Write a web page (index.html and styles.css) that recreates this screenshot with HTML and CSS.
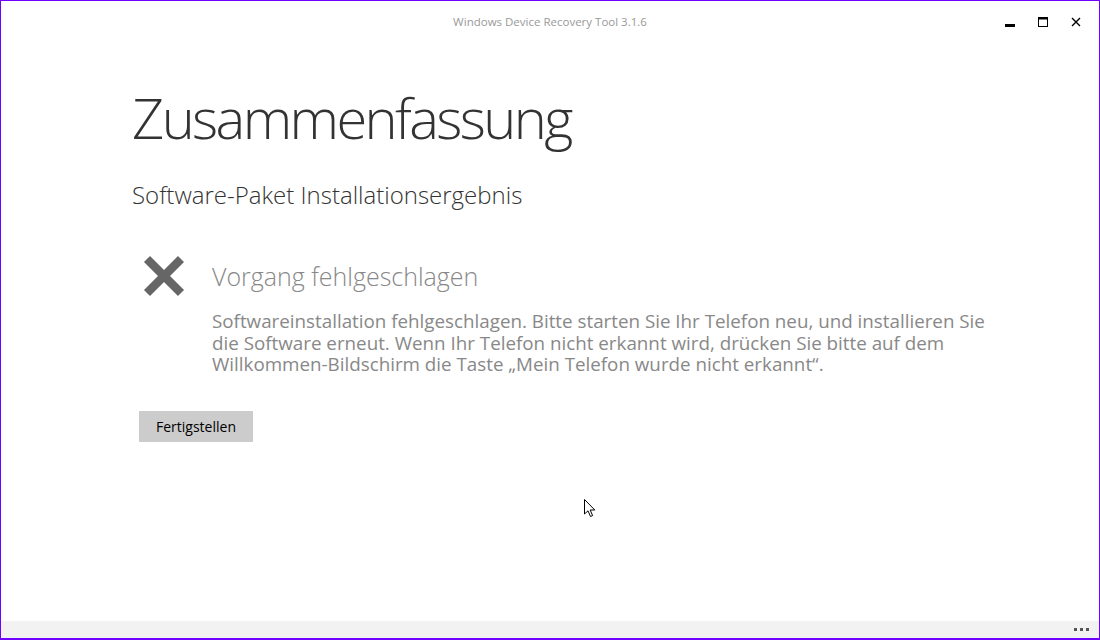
FILE: index.html
```html
<!DOCTYPE html>
<html>
<head>
    <title>Windows Device Recovery Tool 3.1.6</title>
    <link rel="stylesheet" href="styles.css">
</head>
<body>
    <div class="window">
        <div class="titlebar">
            <span class="title">Windows Device Recovery Tool 3.1.6</span>
            <div class="controls">
                <span class="ctl"><svg width="10" height="10" viewBox="0 0 10 10"><rect x="0" y="7" width="10" height="3" fill="#000"/></svg></span>
                <span class="ctl"><svg width="10" height="10" viewBox="0 0 10 10"><rect x="0.5" y="0.5" width="9" height="9" fill="none" stroke="#000"/><rect x="0" y="0" width="10" height="2.5" fill="#000"/></svg></span>
                <span class="ctl"><svg width="10" height="10" viewBox="0 0 10 10"><path d="M1 1 L9 9 M9 1 L1 9" stroke="#000" stroke-width="1.4"/></svg></span>
            </div>
        </div>

        <div class="content">
            <h1 class="page-title">Zusammenfassung</h1>
            <h2 class="subtitle">Software-Paket Installationsergebnis</h2>

            <div class="result">
                <div class="result-icon">
                    <svg width="42" height="42" viewBox="0 0 42 42">
                        <path d="M4 4 L38 38 M38 4 L4 38" stroke="#666" stroke-width="8.5"/>
                    </svg>
                </div>
                <div class="result-text">
                    <div class="result-title">Vorgang fehlgeschlagen</div>
                    <p class="result-desc">Softwareinstallation fehlgeschlagen. Bitte starten Sie Ihr Telefon neu, und installieren Sie die Software erneut. Wenn Ihr Telefon nicht erkannt wird, drücken Sie bitte auf dem Willkommen-Bildschirm die Taste „Mein Telefon wurde nicht erkannt“.</p>
                </div>
            </div>

            <button class="btn">Fertigstellen</button>
        </div>

        <div class="appbar">
            <span class="dots"><i></i><i></i><i></i></span>
        </div>

        <svg class="cursor" width="14" height="20" viewBox="0 0 14 20">
            <path d="M0.5 0.5 L0.5 15 L4 11.8 L6.5 17.5 L8.6 16.6 L6.2 11 L10.8 11 Z" fill="#fff" stroke="#000" stroke-width="1"/>
        </svg>
    </div>
</body>
</html>
```

FILE: styles.css
```css
html, body {
    margin: 0;
    padding: 0;
}

body {
    font-family: "Open Sans", "Noto Sans", sans-serif;
    background: #fff;
}

.window {
    position: relative;
    width: 1100px;
    height: 640px;
    box-sizing: border-box;
    border: 1px solid #7000ff;
    border-bottom-width: 2px;
    display: flex;
    flex-direction: column;
    overflow: hidden;
}

.titlebar {
    height: 42px;
    display: flex;
    align-items: center;
    justify-content: center;
    position: relative;
}

.title {
    font-size: 11.5px;
    color: #999;
    margin-top: -1px;
}

.controls {
    position: absolute;
    right: 7px;
    top: 16px;
    display: flex;
}

.ctl {
    width: 33px;
    height: 12px;
    display: flex;
    justify-content: center;
}

.content {
    flex: 1;
    padding-left: 131px;
}

.page-title {
    font-size: 56px;
    font-weight: 300;
    color: #333;
    margin: 34px 0 0;
    line-height: 80px;
    letter-spacing: -2.6px;
}

.subtitle {
    font-size: 24px;
    font-weight: 300;
    color: #333;
    margin: 22px 0 0;
    line-height: 32px;
}

.result {
    display: flex;
    margin-top: 40px;
}

.result-icon {
    width: 80px;
    padding-left: 11px;
    box-sizing: border-box;
    padding-top: 4px;
}

.result-title {
    font-size: 25px;
    font-weight: 300;
    color: #888;
    line-height: 30px;
    padding-top: 10px;
}

.result-desc {
    font-size: 18.8px;
    color: #888;
    line-height: 21.5px;
    margin: 20px 0 0;
    width: 800px;
}

.btn {
    margin: 35px 0 0 7px;
    width: 114px;
    height: 31px;
    border: none;
    background: #ccc;
    font-family: "Open Sans", sans-serif;
    font-size: 14px;
    font-weight: 500;
    color: #000;
    padding: 0;
}

.appbar {
    height: 17px;
    background: #f2f2f2;
    display: flex;
    justify-content: flex-end;
    align-items: center;
    padding-right: 10px;
}

.dots {
    display: flex;
    gap: 3px;
}

.dots i {
    width: 3px;
    height: 3px;
    background: #555;
}

.cursor {
    position: absolute;
    left: 583px;
    top: 498px;
}
```
